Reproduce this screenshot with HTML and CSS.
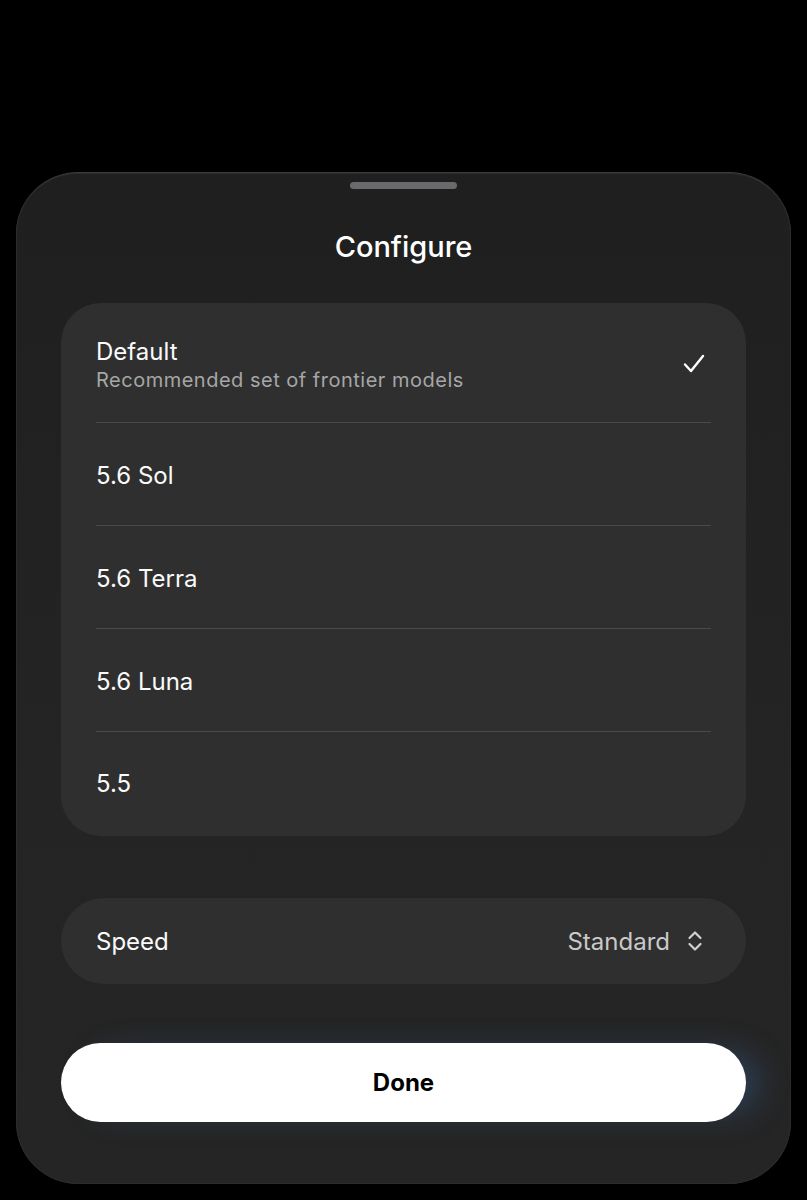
FILE: index.html
```html
<!DOCTYPE html>
<html>
<head>
<meta charset="utf-8">
<link rel="stylesheet" href="styles.css">
</head>
<body>
<div class="sheet">
  <div class="handle"></div>
  <h1 class="title">Configure</h1>
  <div class="card list">
    <div class="row first">
      <div class="texts">
        <div class="label">Default</div>
        <div class="sub">Recommended set of frontier models</div>
      </div>
      <svg class="check" width="22" height="20" viewBox="0 0 22 20"><path d="M2 10.5 L8 17 L20 2" fill="none" stroke="#fff" stroke-width="2.4" stroke-linecap="round" stroke-linejoin="round"/></svg>
    </div>
    <div class="row"><div class="label">5.6 Sol</div></div>
    <div class="row"><div class="label">5.6 Terra</div></div>
    <div class="row"><div class="label">5.6 Luna</div></div>
    <div class="row last"><div class="label">5.5</div></div>
  </div>
  <div class="card speed">
    <div class="label">Speed</div>
    <div class="value">Standard
      <svg class="updown" width="16" height="22" viewBox="0 0 16 22"><path d="M2.5 8 L8 2.5 L13.5 8 M2.5 14 L8 19.5 L13.5 14" fill="none" stroke="#d0d0d0" stroke-width="2.2" stroke-linecap="round" stroke-linejoin="round"/></svg>
    </div>
  </div>
  <button class="done">Done</button>
</div>
</body>
</html>
```
FILE: styles.css
```css
html, body {
  margin: 0;
  padding: 0;
  background: #000;
  height: 1200px;
  overflow: hidden;
}
body {
  font-family: Inter, "Noto Sans", "Liberation Sans", sans-serif;
  color: #fff;
}
.sheet {
  box-sizing: border-box;
  margin: 172px 16px 0 16px;
  height: 1012px;
  border-radius: 62px;
  background: linear-gradient(180deg, #1f1f1f 0%, #242424 60%, #252525 100%);
  border-top: 1px solid #3c3c3c;
  box-shadow: inset 0 0 0 1px #2c2c2c;
  padding: 0 45px;
  display: flex;
  flex-direction: column;
}
.handle {
  width: 107px;
  height: 7px;
  border-radius: 4px;
  background: #6a6a6d;
  margin: 9px auto 0;
}
.title {
  margin: 40px 0 0;
  height: 36px;
  line-height: 36px;
  text-align: center;
  font-size: 29px;
  font-weight: 500;
  letter-spacing: 0;
}
.card {
  background: #2f2f2f;
  border-radius: 40px;
}
.list {
  margin-top: 38px;
  padding: 0 35px;
  display: flex;
  flex-direction: column;
}
.row {
  box-sizing: border-box;
  height: 103px;
  padding-top: 3px;
  display: flex;
  align-items: center;
  border-bottom: 1px solid #4a4a4a;
}
.row.first {
  height: 120px;
  padding-top: 0;
  justify-content: space-between;
}
.row.last {
  border-bottom: none;
  height: 104px;
  padding-top: 0;
  padding-bottom: 2px;
}
.label {
  font-size: 24px;
  font-weight: 400;
  color: #fafafa;
  letter-spacing: 0;
}
.first .texts {
  margin-top: 6px;
}
.first .label {
  line-height: 28px;
}
.sub {
  font-size: 20px;
  color: #a6a6a6;
  line-height: 28px;
  letter-spacing: 0.5px;
}
.check {
  margin-right: 6px;
  margin-top: 2px;
}
.speed {
  margin-top: 62px;
  height: 86px;
  border-radius: 43px;
  padding: 0 35px;
  display: flex;
  align-items: center;
  justify-content: space-between;
}
.value {
  display: flex;
  align-items: center;
  gap: 17px;
  font-size: 24px;
  color: #c9c9c9;
}
.updown {
  margin-right: 8px;
}
.done {
  margin-top: 59px;
  height: 79px;
  border: none;
  border-radius: 40px;
  background: #fff;
  color: #000;
  font-family: Inter, "Noto Sans", "Liberation Sans", sans-serif;
  font-size: 24px;
  font-weight: 700;
  box-shadow: 22px 0 30px -8px rgba(60, 110, 170, 0.35);
}
```
